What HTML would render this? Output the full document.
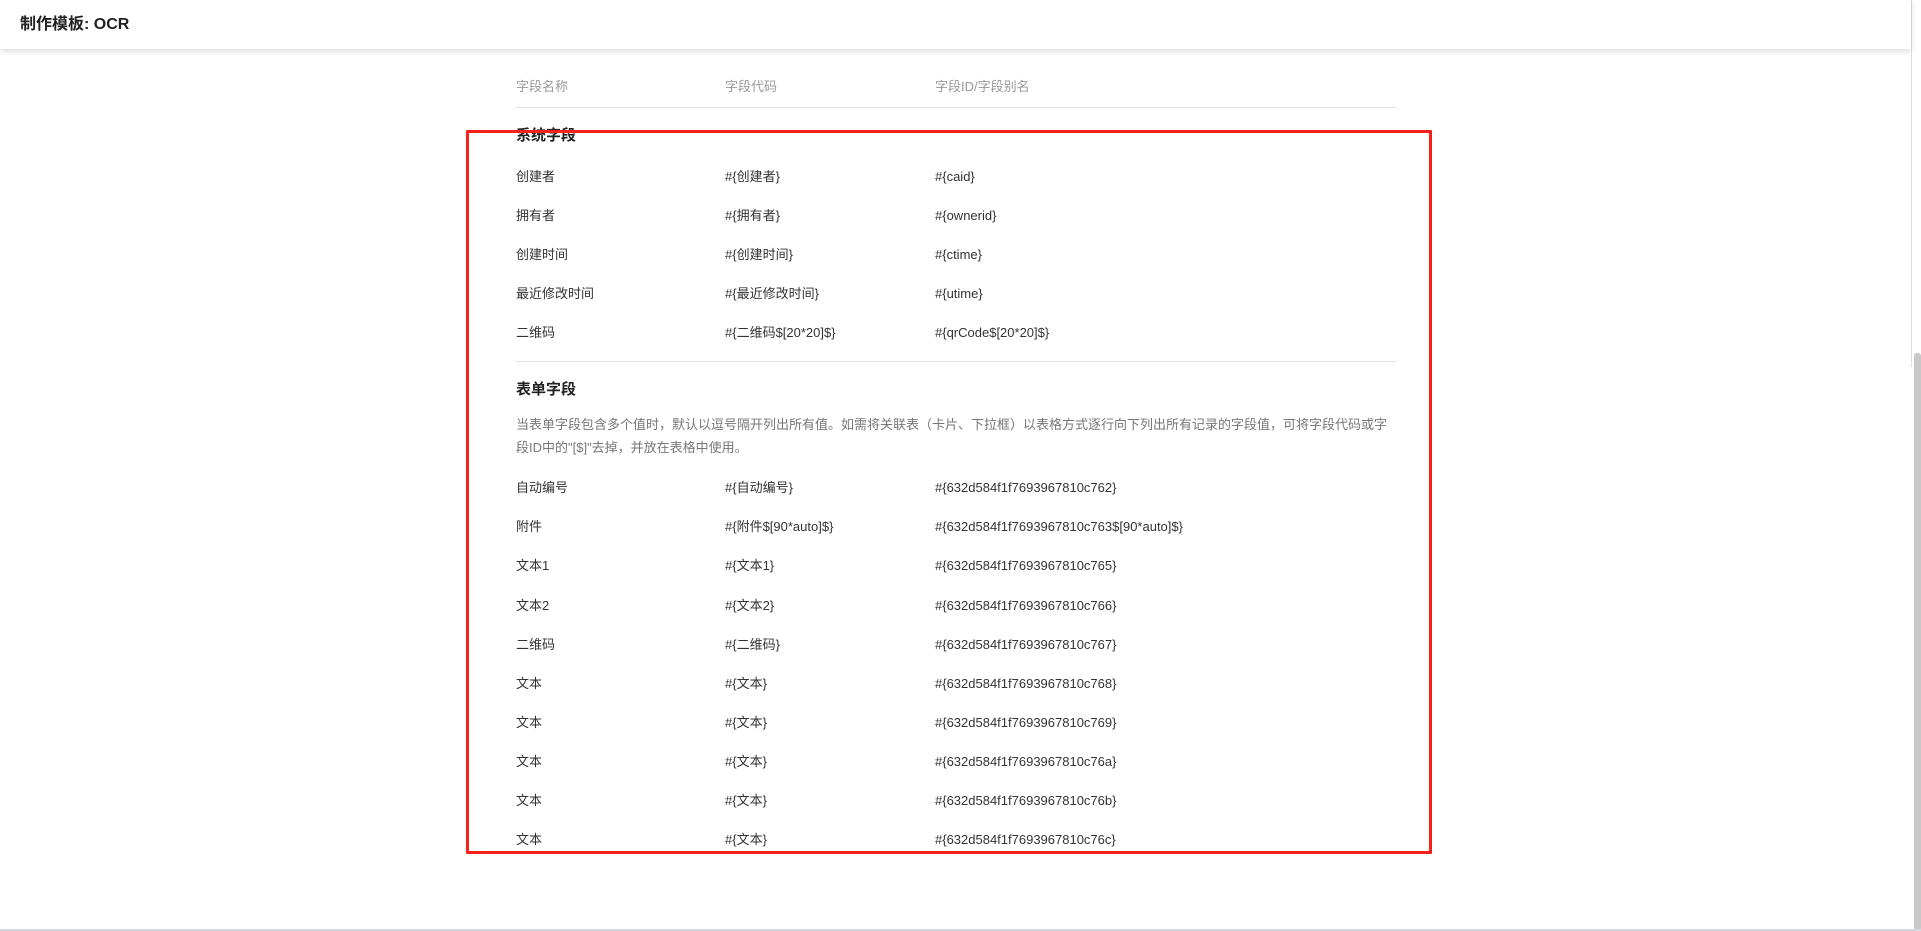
<!DOCTYPE html>
<html><head><meta charset="utf-8"><style>
html,body{margin:0;padding:0;}
body{width:1921px;height:931px;position:relative;overflow:hidden;background:#fff;font-family:"Liberation Sans","Noto Sans CJK SC",sans-serif;color:#333;}
.hdr{position:absolute;left:0;top:0;width:1911px;height:49px;background:#fff;box-shadow:0 2px 6px rgba(0,0,0,0.15);z-index:2;}
.hdr span{position:absolute;left:20px;top:15px;font-size:16px;font-weight:bold;color:#222;line-height:20px;}
.t{position:absolute;font-size:13px;line-height:18px;white-space:nowrap;}
.h{color:#999;}
.b{font-weight:bold;font-size:15px;color:#222;}
.line{position:absolute;left:516px;width:880px;height:1px;background:#e4e4e4;}
.red{position:absolute;left:466px;top:130px;width:960px;height:718px;border:3px solid #f5221b;border-radius:1px;}
.desc{position:absolute;left:516px;top:413px;width:880px;font-size:13px;line-height:23px;color:#777;}
.sb{position:absolute;left:1914px;top:353px;width:7px;height:578px;background:#c8c8c8;border-radius:3px;}
.vl{position:absolute;left:1911px;top:0;width:1px;height:367px;background:#ddd;}
.bot{position:absolute;left:0;top:929px;width:1921px;height:2px;background:#d0d8e4;}
</style></head><body>
<div class="hdr"><span>制作模板: OCR</span></div>
<div class="vl"></div>
<div class="sb"></div>
<div class="t h" style="left:516px;top:78px">字段名称</div>
<div class="t h" style="left:725px;top:78px">字段代码</div>
<div class="t h" style="left:935px;top:78px">字段ID/字段别名</div>
<div class="line" style="top:107px"></div>
<div class="t b" style="left:516px;top:127px">系统字段</div>

<div class="t" style="left:516px;top:168px">创建者</div><div class="t" style="left:725px;top:168px">#{创建者}</div><div class="t" style="left:935px;top:168px">#{caid}</div>
<div class="t" style="left:516px;top:207px">拥有者</div><div class="t" style="left:725px;top:207px">#{拥有者}</div><div class="t" style="left:935px;top:207px">#{ownerid}</div>
<div class="t" style="left:516px;top:246px">创建时间</div><div class="t" style="left:725px;top:246px">#{创建时间}</div><div class="t" style="left:935px;top:246px">#{ctime}</div>
<div class="t" style="left:516px;top:285px">最近修改时间</div><div class="t" style="left:725px;top:285px">#{最近修改时间}</div><div class="t" style="left:935px;top:285px">#{utime}</div>
<div class="t" style="left:516px;top:324px">二维码</div><div class="t" style="left:725px;top:324px">#{二维码$[20*20]$}</div><div class="t" style="left:935px;top:324px">#{qrCode$[20*20]$}</div>
<div class="line" style="top:361px"></div>
<div class="t b" style="left:516px;top:381px">表单字段</div>
<div class="desc">当表单字段包含多个值时，默认以逗号隔开列出所有值。如需将关联表（卡片、下拉框）以表格方式逐行向下列出所有记录的字段值，可将字段代码或字段ID中的"[$]"去掉，并放在表格中使用。</div>

<div class="t" style="left:516px;top:479px">自动编号</div><div class="t" style="left:725px;top:479px">#{自动编号}</div><div class="t" style="left:935px;top:479px">#{632d584f1f7693967810c762}</div>
<div class="t" style="left:516px;top:518px">附件</div><div class="t" style="left:725px;top:518px">#{附件$[90*auto]$}</div><div class="t" style="left:935px;top:518px">#{632d584f1f7693967810c763$[90*auto]$}</div>
<div class="t" style="left:516px;top:557px">文本1</div><div class="t" style="left:725px;top:557px">#{文本1}</div><div class="t" style="left:935px;top:557px">#{632d584f1f7693967810c765}</div>
<div class="t" style="left:516px;top:597px">文本2</div><div class="t" style="left:725px;top:597px">#{文本2}</div><div class="t" style="left:935px;top:597px">#{632d584f1f7693967810c766}</div>
<div class="t" style="left:516px;top:636px">二维码</div><div class="t" style="left:725px;top:636px">#{二维码}</div><div class="t" style="left:935px;top:636px">#{632d584f1f7693967810c767}</div>
<div class="t" style="left:516px;top:675px">文本</div><div class="t" style="left:725px;top:675px">#{文本}</div><div class="t" style="left:935px;top:675px">#{632d584f1f7693967810c768}</div>
<div class="t" style="left:516px;top:714px">文本</div><div class="t" style="left:725px;top:714px">#{文本}</div><div class="t" style="left:935px;top:714px">#{632d584f1f7693967810c769}</div>
<div class="t" style="left:516px;top:753px">文本</div><div class="t" style="left:725px;top:753px">#{文本}</div><div class="t" style="left:935px;top:753px">#{632d584f1f7693967810c76a}</div>
<div class="t" style="left:516px;top:792px">文本</div><div class="t" style="left:725px;top:792px">#{文本}</div><div class="t" style="left:935px;top:792px">#{632d584f1f7693967810c76b}</div>
<div class="t" style="left:516px;top:831px">文本</div><div class="t" style="left:725px;top:831px">#{文本}</div><div class="t" style="left:935px;top:831px">#{632d584f1f7693967810c76c}</div>

<div class="red"></div>
<div class="bot"></div>
</body></html>
